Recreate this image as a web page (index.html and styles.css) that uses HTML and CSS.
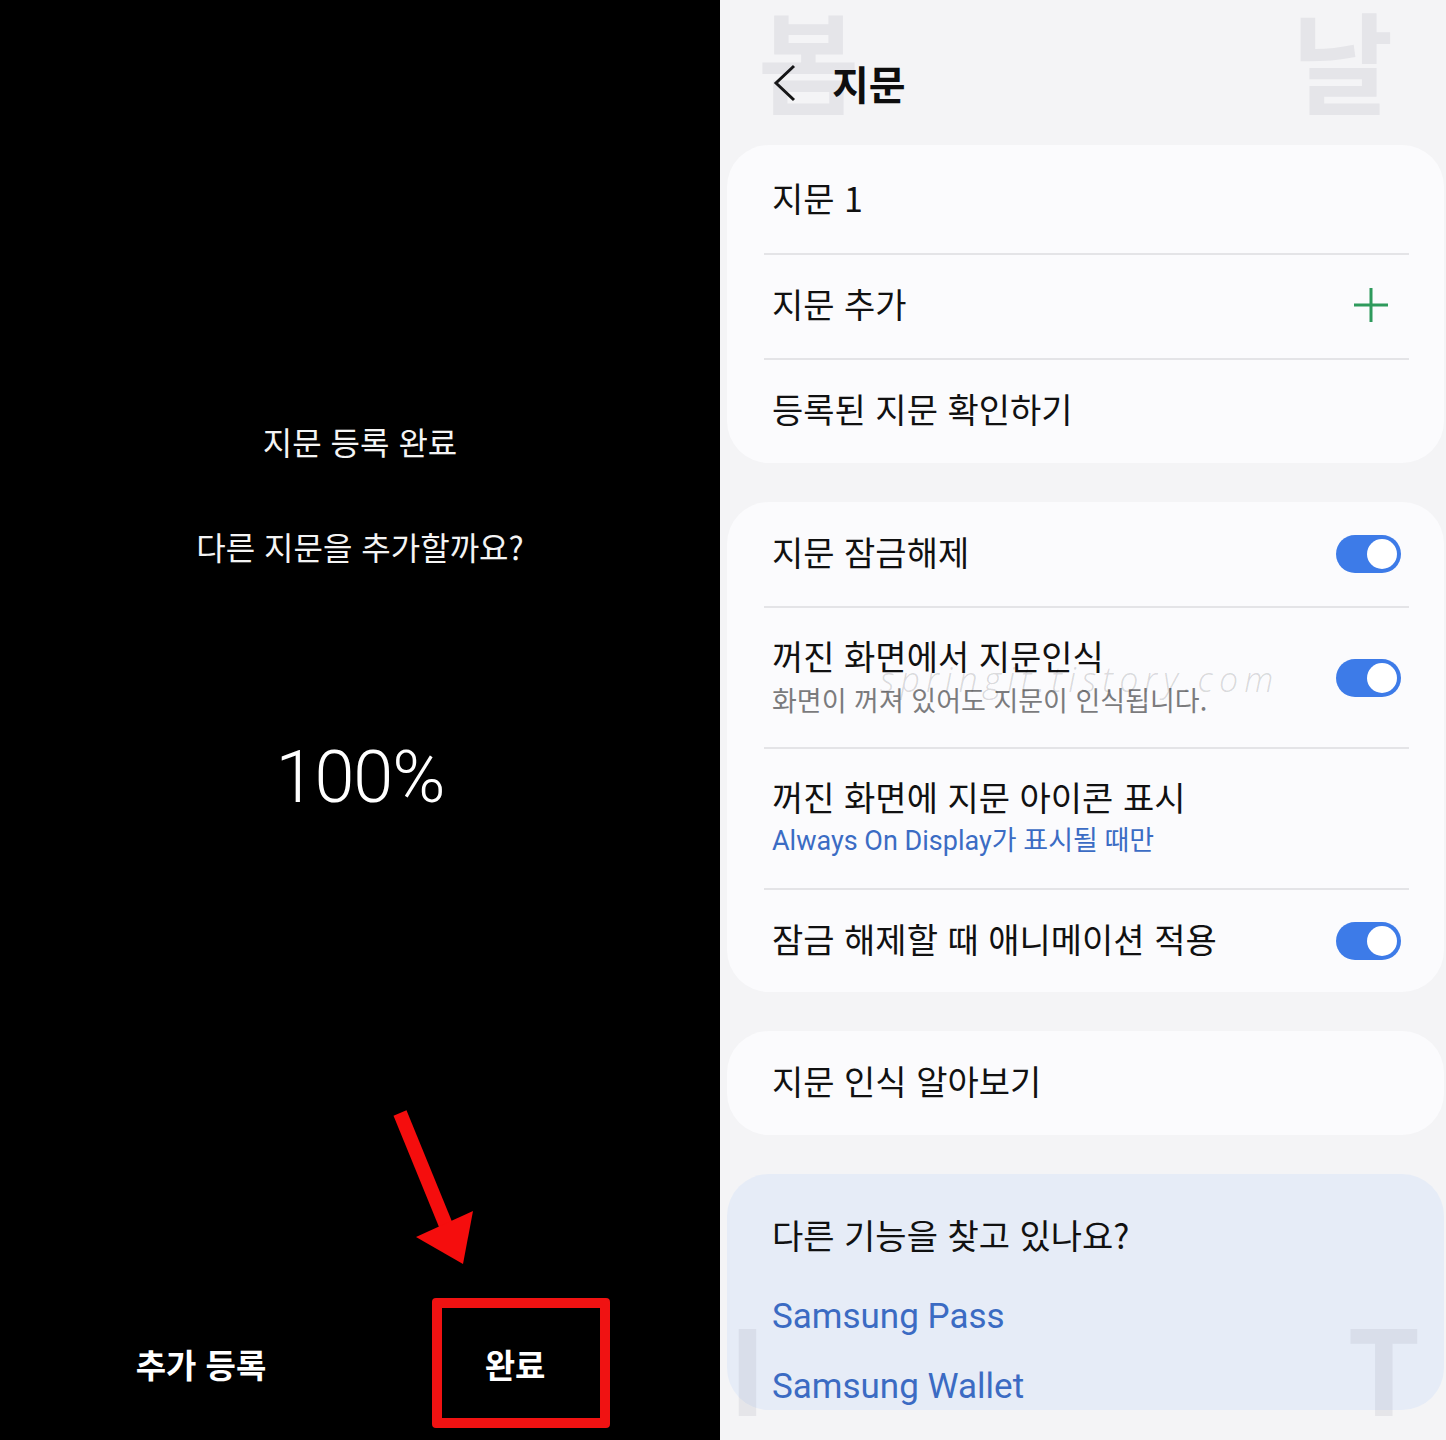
FILE: index.html
```html
<!DOCTYPE html>
<html lang="ko">
<head>
<meta charset="utf-8">
<title>지문</title>
<link rel="stylesheet" href="styles.css">
</head>
<body>
<div class="page">
  <section class="left">
    <p class="l-title">지문 등록 완료</p>
    <p class="l-question">다른 지문을 추가할까요?</p>
    <p class="l-percent">100%</p>
    <div class="l-actions">
      <span class="l-btn">추가 등록</span>
      <span class="l-btn">완료</span>
    </div>
    <div class="highlight-box"></div>
    <svg class="arrow" width="110" height="175" viewBox="380 1100 110 175">
      <line x1="400" y1="1113" x2="447" y2="1228" stroke="#f50d0d" stroke-width="14"/>
      <polygon points="416,1237 473,1211 463,1264" fill="#f50d0d"/>
    </svg>
  </section>

  <section class="right">
    <header class="topbar">
      <svg class="back" width="24" height="40" viewBox="0 0 24 40">
        <path d="M21 3 L3 20 L21 37" fill="none" stroke="#141414" stroke-width="3" stroke-linejoin="miter"/>
      </svg>
      <h1 class="topbar-title">지문</h1>
    </header>

    <div class="card card-first">
      <div class="row"><span class="row-title">지문 1</span></div>
      <div class="row">
        <span class="row-title">지문 추가</span>
        <svg class="plus" width="34" height="34" viewBox="0 0 34 34">
          <path d="M17 0 V34 M0 17 H34" stroke="#2e9a5c" stroke-width="3"/>
        </svg>
      </div>
      <div class="row"><span class="row-title">등록된 지문 확인하기</span></div>
    </div>

    <div class="card">
      <div class="row">
        <span class="row-title">지문 잠금해제</span>
        <span class="toggle"><span class="knob"></span></span>
      </div>
      <div class="row row-two">
        <div class="row-text">
          <span class="row-title">꺼진 화면에서 지문인식</span>
          <span class="row-sub">화면이 꺼져 있어도 지문이 인식됩니다.</span>
        </div>
        <span class="toggle"><span class="knob"></span></span>
      </div>
      <div class="row row-two">
        <div class="row-text">
          <span class="row-title">꺼진 화면에 지문 아이콘 표시</span>
          <span class="row-sub row-sub-blue">Always On Display가 표시될 때만</span>
        </div>
      </div>
      <div class="row">
        <span class="row-title">잠금 해제할 때 애니메이션 적용</span>
        <span class="toggle"><span class="knob"></span></span>
      </div>
    </div>

    <div class="card">
      <div class="row"><span class="row-title">지문 인식 알아보기</span></div>
    </div>

    <div class="card card-suggest">
      <p class="suggest-title">다른 기능을 찾고 있나요?</p>
      <p class="suggest-link">Samsung Pass</p>
      <p class="suggest-link suggest-link-2">Samsung Wallet</p>
    </div>

    <span class="wm wm-bom">봄</span>
    <span class="wm wm-nal">날</span>
    <span class="wm wm-i">I</span>
    <span class="wm wm-t">T</span>
    <span class="wm-url">springit.tistory.com</span>
  </section>
</div>
</body>
</html>
```

FILE: styles.css
```css
* { box-sizing: border-box; }

html, body {
  margin: 0;
  padding: 0;
  background: #000;
}

.page {
  display: flex;
  width: 1446px;
  height: 1440px;
  overflow: hidden;
  font-family: Roboto, "Noto Sans CJK KR", sans-serif;
}

/* ---------- left (black) screen ---------- */
.left {
  position: relative;
  width: 720px;
  flex: 0 0 720px;
  height: 1440px;
  background: #000;
  color: #fff;
  display: flex;
  flex-direction: column;
  align-items: center;
}

.l-title,
.l-question {
  margin: 0;
  font-family: "Noto Sans CJK KR", sans-serif;
  font-size: 32px;
  line-height: 48px;
  font-weight: 400;
  color: #f4f4f4;
}

.l-title { margin-top: 417px; }
.l-question { margin-top: 57px; }

.l-percent {
  margin: 168px 0 0 0;
  font-family: Roboto, sans-serif;
  font-weight: 300;
  font-size: 72px;
  line-height: 80px;
  letter-spacing: -1px;
  color: #fff;
}

.l-actions {
  margin-top: auto;
  width: 100%;
  display: grid;
  grid-template-columns: 1fr 1fr;
  padding: 0 48px 46px 44px;
}

.l-btn {
  justify-self: center;
  font-family: "Noto Sans CJK KR", sans-serif;
  font-weight: 700;
  font-size: 33px;
  line-height: 60px;
  color: #fff;
}

.highlight-box {
  position: absolute;
  left: 432px;
  top: 1298px;
  width: 178px;
  height: 130px;
  border: 10px solid #f01212;
  border-radius: 4px;
}

.arrow {
  position: absolute;
  left: 380px;
  top: 1100px;
}

/* ---------- right (settings) screen ---------- */
.right {
  position: relative;
  flex: 1 1 auto;
  height: 1440px;
  background: #f4f4f6;
  color: #111;
  display: flex;
  flex-direction: column;
}

.topbar {
  height: 145px;
  flex: 0 0 145px;
  display: flex;
  align-items: center;
  padding: 20px 0 0 53px;
}

.back { display: block; }

.topbar-title {
  margin: 0 0 0 35px;
  font-family: "Noto Sans CJK KR", sans-serif;
  font-weight: 700;
  font-size: 40px;
  line-height: 50px;
  color: #0d0d0d;
}

.card {
  flex: 0 0 auto;
  margin: 0 2px 39px 7px;
  background: #fbfbfd;
  border-radius: 42px;
  padding: 0 35px 0 37px;
}

.card-first { padding-top: 3px; }

.row {
  display: flex;
  align-items: center;
  justify-content: space-between;
  min-height: 104px;
  padding: 0 8px 5px 8px;
  border-top: 2px solid #e4e4e7;
}

.card-first .row { min-height: 105px; }

.row:first-child { border-top: none; }

.row-two {
  min-height: 141px;
  padding-top: 25px;
  padding-bottom: 24px;
}

.row-text {
  display: flex;
  flex-direction: column;
}

.row-title {
  font-family: "Noto Sans CJK KR", sans-serif;
  font-size: 34px;
  line-height: 44px;
  color: #111;
}

.row-sub {
  font-family: "Noto Sans CJK KR", sans-serif;
  font-size: 27px;
  line-height: 44px;
  color: #7b7b7d;
}

.row-sub-blue {
  font-family: Roboto, "Noto Sans CJK KR", sans-serif;
  color: #3b6cc4;
}

.plus {
  display: block;
  margin-right: 13px;
  margin-top: 2px;
}

.toggle {
  display: flex;
  justify-content: flex-end;
  align-items: center;
  width: 65px;
  height: 38px;
  padding: 0 4px;
  border-radius: 19px;
  background: #3d7be8;
  margin-top: 4px;
}

.row-two .toggle { margin-top: 0; }

.knob {
  width: 30px;
  height: 30px;
  border-radius: 50%;
  background: #fff;
}

.card-suggest {
  height: 236px;
  overflow: hidden;
  margin-bottom: 0;
  background: #e6ecf7;
  padding: 36px 0 0 45px;
}

.suggest-title {
  margin: 0;
  font-family: "Noto Sans CJK KR", sans-serif;
  font-size: 34px;
  line-height: 50px;
  color: #111;
}

.suggest-link {
  margin: 27px 0 0 0;
  font-family: Roboto, sans-serif;
  font-size: 35px;
  line-height: 60px;
  color: #3b6bc3;
}

.suggest-link-2 { margin-top: 10px; }

/* watermarks */
.wm {
  position: absolute;
  font-family: "Noto Sans CJK KR", sans-serif;
  font-weight: 700;
  color: rgba(70, 70, 90, 0.08);
  pointer-events: none;
}

.wm-bom, .wm-nal {
  font-size: 110px;
  line-height: 110px;
  top: 3px;
}

.wm-bom { left: 38px; }
.wm-nal { left: 572px; }

.wm-i, .wm-t {
  font-size: 118px;
  line-height: 118px;
  top: 1306px;
}

.wm-i { left: 8px; }
.wm-t { left: 627px; }

.wm-url {
  position: absolute;
  left: 160px;
  top: 659px;
  font-family: "Open Sans", sans-serif;
  font-style: italic;
  font-weight: 300;
  font-size: 34px;
  line-height: 40px;
  letter-spacing: 6px;
  color: rgba(0, 0, 0, 0.14);
  pointer-events: none;
}
```
